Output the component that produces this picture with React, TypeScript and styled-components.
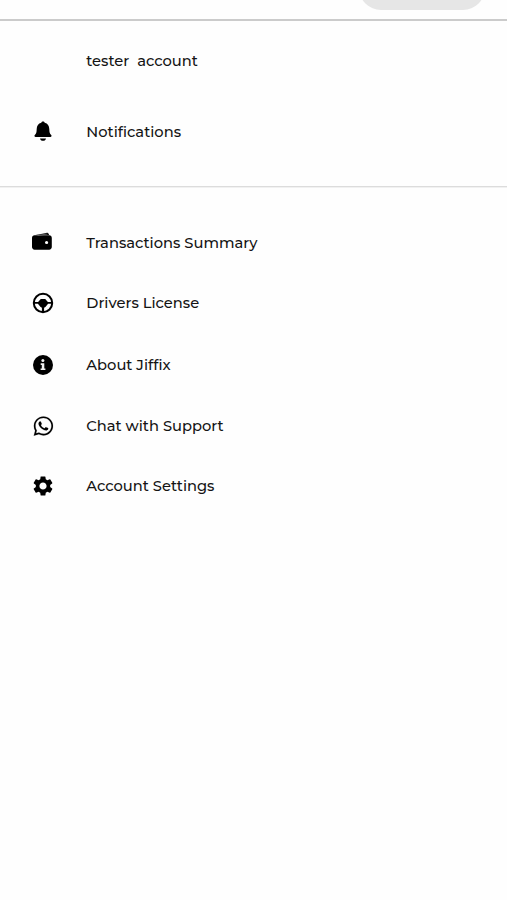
import React from 'react';
import styled, { createGlobalStyle } from 'styled-components';
import { FaWhatsapp } from 'react-icons/fa';
import { MdSettings } from 'react-icons/md';

const GlobalStyle = createGlobalStyle`
  body {
    margin: 0;
    background: #fefefe;
    color: #141414;
    font-family: Montserrat, Inter, sans-serif;
  }
`;

const Page = styled.main`
  min-height: 900px;
  overflow: hidden;
`;

const Header = styled.header`
  box-sizing: border-box;
  height: 21px;
  display: flex;
  justify-content: flex-end;
  align-items: flex-start;
  padding-right: 22px;
  border-bottom: 2px solid #cbcbcb;
  overflow: hidden;
`;

const HeaderPill = styled.div`
  width: 126px;
  height: 44px;
  margin-top: -34px;
  border-radius: 22px;
  background: #e6e6e6;
`;

const Menu = styled.nav<{ $top: number; $bottom: number }>`
  display: flex;
  flex-direction: column;
  padding: ${(p) => p.$top}px 0 ${(p) => p.$bottom}px 31px;
`;

const Divider = styled.hr`
  height: 1px;
  margin: 0;
  border: 0;
  background: #dcdcdc;
  box-shadow: 0 1px 0 #f1f1f1;
`;

const Item = styled.a<{ $height: number }>`
  display: grid;
  grid-template-columns: 24px 1fr;
  column-gap: 31.3px;
  align-items: center;
  height: ${(p) => p.$height}px;
`;

const IconSlot = styled.span`
  display: flex;
  align-items: center;
  justify-content: center;
  width: 24px;
  height: 24px;
  color: #000;
`;

const Label = styled.span`
  font-size: 14.7px;
  font-weight: 500;
  line-height: 20px;
  white-space: pre;
`;

const BellIcon = () => (
  <svg width="24" height="24" viewBox="0 0 24 24" fill="currentColor">
    <path d="M12 1.500c.9 0 1.500.5 1.700 1.200 3 .8 4.500 3.100 4.600 6.200.1 3.300.4 4.700 1.900 6.200.7.700.3 1.900-.8 1.900H4.600c-1.100 0-1.500-1.200-.8-1.900 1.500-1.500 1.800-2.900 1.900-6.200.1-3.100 1.600-5.400 4.600-6.200.2-.7.8-1.200 1.700-1.200Z" />
    <path d="M9 18.500h6c-.3 1.400-1.400 2.300-3 2.300s-2.700-.9-3-2.300Z" />
  </svg>
);

const WalletIcon = () => (
  <svg width="24" height="24" viewBox="0 0 24 24" fill="currentColor">
    <path d="M4.500 4.100 15.300 1.900c1.200-.3 2.300.4 2.600 1.500l.1.500Z" />
    <path
      fillRule="evenodd"
      d="M3.600 4.300h14.600c1.500 0 2.600 1.100 2.600 2.600v9.200c0 1.500-1.100 2.600-2.600 2.600H3.600c-1.500 0-2.600-1.100-2.600-2.600V6.900c0-1.500 1.100-2.600 2.600-2.600Zm12 5.600a1.600 1.600 0 1 0 0 3.200 1.600 1.600 0 0 0 0-3.200Z"
    />
    <path d="m6.500 4.300 10-1.200" stroke="#999" strokeWidth=".6" fill="none" />
  </svg>
);

const WheelIcon = () => (
  <svg width="24" height="24" viewBox="0 0 24 24" fill="currentColor">
    <circle cx="12" cy="12" r="9.200" fill="none" stroke="currentColor" strokeWidth="2" />
    <path d="M3 10.900h4.100L9.800 8.100h4.400l2.700 2.800H21v1.900h-3.900l-2.700 3.100-1.300.8v4.300h-2.200v-4.300l-1.300-.8-2.700-3.100H3Z" />
  </svg>
);

const InfoIcon = () => (
  <svg width="24" height="24" viewBox="0 0 24 24" fill="currentColor">
    <circle cx="12" cy="12" r="10" />
    <circle cx="11.900" cy="7.500" r="1.500" fill="#f2f2f2" />
    <path d="M9.700 10.200h3.600v5.200h1.100v1.700H9.600v-1.700h1.200v-3.500H9.700Z" fill="#f2f2f2" />
  </svg>
);

const ChatIcon = styled(FaWhatsapp)`
  stroke: currentColor;
  stroke-width: 3px;
  transform: translateX(0.4px);
`;

interface Entry {
  label: string;
  height: number;
  icon?: React.ReactNode;
}

const accountEntries: Entry[] = [
  { label: 'tester  account', height: 60 },
  { label: 'Notifications', height: 81, icon: <BellIcon /> },
];

const menuEntries: Entry[] = [
  { label: 'Transactions Summary', height: 60, icon: <WalletIcon /> },
  { label: 'Drivers License', height: 60, icon: <WheelIcon /> },
  { label: 'About Jiffix', height: 64, icon: <InfoIcon /> },
  { label: 'Chat with Support', height: 58, icon: <ChatIcon size={22} /> },
  { label: 'Account Settings', height: 62, icon: <MdSettings size={24} /> },
];

const MenuItem = ({ label, height, icon }: Entry) => (
  <Item $height={height}>
    <IconSlot>{icon}</IconSlot>
    <Label>{label}</Label>
  </Item>
);

export default function App() {
  return (
    <>
      <GlobalStyle />
      <Page>
        <Header>
          <HeaderPill />
        </Header>
        <Menu $top={10} $bottom={14}>
          {accountEntries.map((entry) => (
            <MenuItem key={entry.label} {...entry} />
          ))}
        </Menu>
        <Divider />
        <Menu $top={26} $bottom={0}>
          {menuEntries.map((entry) => (
            <MenuItem key={entry.label} {...entry} />
          ))}
        </Menu>
      </Page>
    </>
  );
}
